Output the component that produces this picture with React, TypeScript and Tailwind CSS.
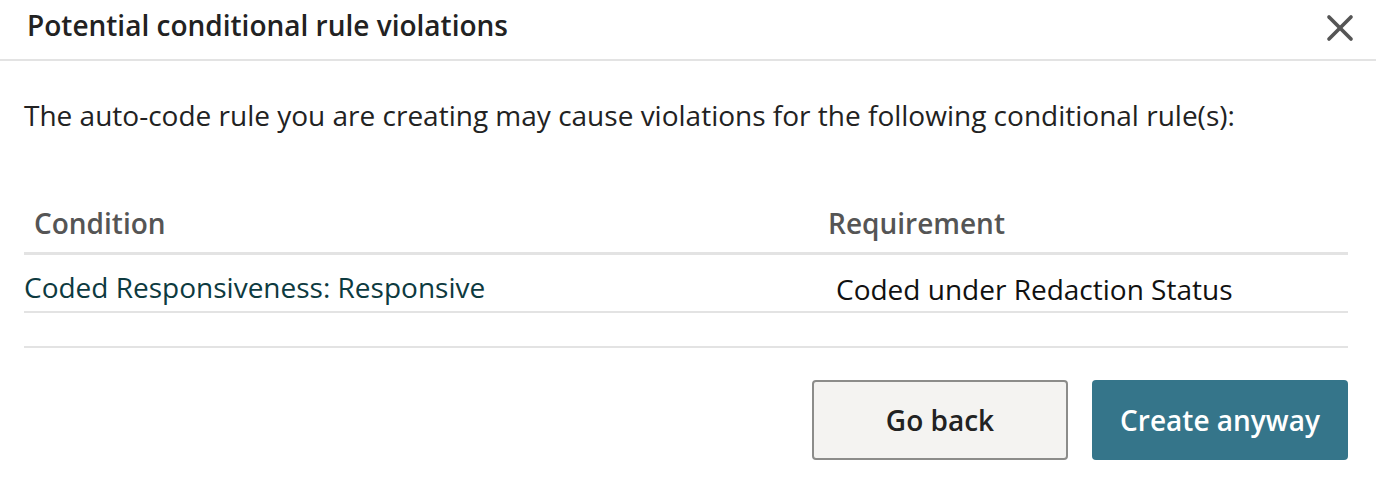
import { X } from 'lucide-react'

const font = { fontFamily: '"Open Sans", "Noto Sans", sans-serif' }

export default function App() {
  return (
    <div className="w-[1376px] h-[478px] bg-white text-[#222]" style={font}>
      <div className="flex h-[61px] items-start justify-between border-b-2 border-[#e3e3e3] pl-[27px] pr-[14px]">
        <h2 className="pt-[4px] text-[28px] leading-[42px] font-semibold text-[#222]">Potential conditional rule violations</h2>
        <button className="mt-[6px] text-[#555]">
          <X size={44} strokeWidth={2} />
        </button>
      </div>

      <div className="pl-[24px] pr-[28px]">
        <p className="pt-[33px] text-[28px] leading-[42px] text-[#222]">
          The auto-code rule you are creating may cause violations for the following conditional rule(s):
        </p>

        <table className="mt-[66px] w-full border-collapse">
          <thead>
            <tr className="border-b-[3px] border-[#e3e3e3]">
              <th className="w-[794px] pb-[8px] pl-[10px] text-left text-[28px] leading-[42px] font-semibold text-[#555]">Condition</th>
              <th className="pb-[8px] pl-[10px] text-left text-[28px] leading-[42px] font-semibold text-[#555]">Requirement</th>
            </tr>
          </thead>
          <tbody>
            <tr className="border-b-2 border-[#e3e3e3]">
              <td className="pt-[11px] pb-[3px] align-top text-[28px] leading-[42px] text-[#0d3a40]">Coded Responsiveness: Responsive</td>
              <td className="pt-[13px] pb-[1px] pl-[18px] align-top text-[28px] leading-[42px] text-[#111]">Coded under Redaction Status</td>
            </tr>
          </tbody>
        </table>

        <div className="mt-[33px] border-t-2 border-[#e3e3e3]" />

        <div className="flex justify-end gap-[24px] pt-[32px]">
          <button className="h-[80px] w-[256px] rounded-[4px] border-2 border-[#8c8c8a] bg-[#f4f3f1] text-[28px] font-semibold text-[#222]">
            Go back
          </button>
          <button className="h-[80px] w-[256px] rounded-[4px] bg-[#35758a] text-[28px] font-semibold text-white">
            Create anyway
          </button>
        </div>
      </div>
    </div>
  )
}
